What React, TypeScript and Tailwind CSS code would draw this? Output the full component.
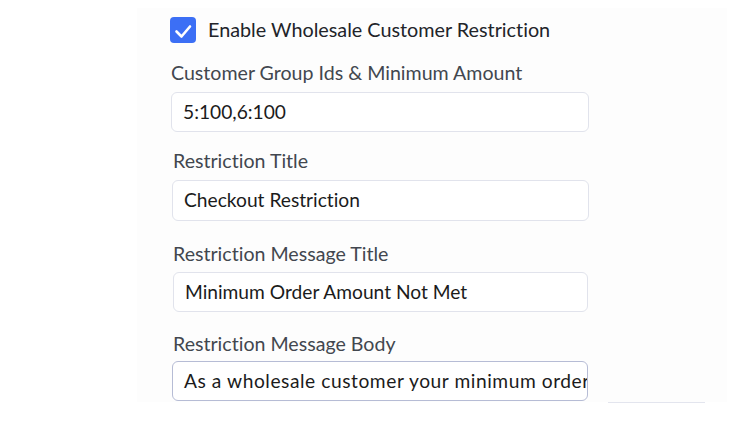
import React from "react";

const font = { fontFamily: '"Lato", "Noto Sans", sans-serif' };

function Field({
  label,
  value,
  labelClass,
  inputClass,
  textClass,
  focused,
}: {
  label: string;
  value: string;
  labelClass: string;
  inputClass: string;
  textClass?: string;
  focused?: boolean;
}) {
  return (
    <div className="flex flex-col">
      <div className={`text-[19.6px] leading-[24px] text-[#42474f] whitespace-nowrap ${labelClass}`}>{label}</div>
      <div
        className={`h-[40px] rounded-[6px] border bg-white flex items-center overflow-hidden ${
          focused ? "border-[#b6bcd5]" : "border-[#e1e3ec]"
        } ${inputClass}`}
      >
        <span className={`pl-[11px] text-[19.2px] text-[#1b1b1b] whitespace-nowrap ${textClass ?? ""}`}>{value}</span>
      </div>
    </div>
  );
}

export default function App() {
  return (
    <div className="w-[750px] h-[425px] bg-white overflow-hidden relative [font-variant-ligatures:none]" style={font}>
      <div className="ml-[137px] mt-[8px] w-[590px] h-[394px] bg-[#fdfdfd] flex flex-col pt-[9px]">
        <div className="flex items-center ml-[33px] h-[26px]">
          <div className="w-[26px] h-[26px] rounded-[4px] bg-[#3c6ff5] flex items-center justify-center">
            <svg width="26" height="26" viewBox="0 0 26 26" fill="none">
              <path d="M6.5 14.5 L11.5 19.5 L20 9.5" stroke="white" strokeWidth="2.6" strokeLinecap="round" strokeLinejoin="round" />
            </svg>
          </div>
          <span className="ml-[12px] text-[19.8px] text-[#222429] whitespace-nowrap">Enable Wholesale Customer Restriction</span>
        </div>
        <div className="mt-[18px]">
          <Field
            label="Customer Group Ids & Minimum Amount"
            value="5:100,6:100"
            labelClass="ml-[34px] mb-[7px]"
            inputClass="ml-[34px] w-[418px]"
          />
        </div>
        <div className="mt-[17px]">
          <Field
            label="Restriction Title"
            value="Checkout Restriction"
            labelClass="ml-[36px] mb-[7px]"
            inputClass="ml-[35px] w-[417px] h-[41px]"
          />
        </div>
        <div className="mt-[21px]">
          <Field
            label="Restriction Message Title"
            value="Minimum Order Amount Not Met"
            labelClass="ml-[36px] mb-[6px]"
            inputClass="ml-[36px] w-[415px]"
          />
        </div>
        <div className="mt-[20px]">
          <Field
            label="Restriction Message Body"
            value="As a wholesale customer your minimum order"
            labelClass="ml-[36px] mb-[5px]"
            inputClass="ml-[35px] w-[416px]"
            textClass="tracking-[0.55px]"
            focused
          />
        </div>
      </div>
      <div className="absolute left-[608px] top-[402px] w-[97px] h-[1px] bg-[#e3e5ee]" />
    </div>
  );
}
